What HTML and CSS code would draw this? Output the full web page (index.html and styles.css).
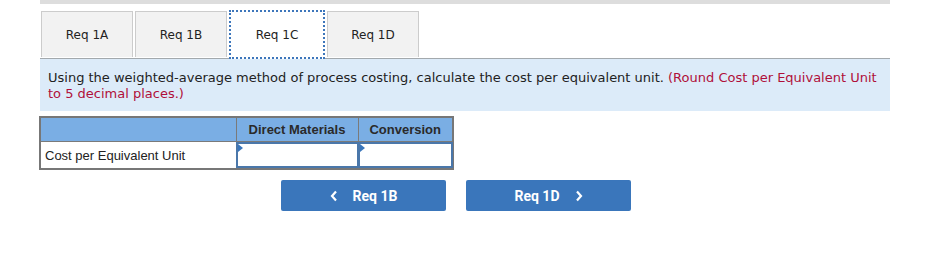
FILE: index.html
```html
<!DOCTYPE html>
<html>
<head>
<meta charset="utf-8">
<link rel="stylesheet" href="styles.css">
</head>
<body>
<div class="wrap">
  <div class="topbar"></div>
  <div class="tabs">
    <div class="tab">Req 1A</div>
    <div class="tab">Req 1B</div>
    <div class="tab active">Req 1C</div>
    <div class="tab">Req 1D</div>
  </div>
  <div class="panel">
    <p class="instr">Using the weighted-average method of process costing, calculate the cost per equivalent unit. <span class="note">(Round Cost per Equivalent Unit to 5 decimal places.)</span></p>
  </div>
  <table class="grid">
    <colgroup>
      <col class="c1">
      <col class="c2">
      <col class="c3">
    </colgroup>
    <tr class="head">
      <th class="label"></th>
      <th>Direct Materials</th>
      <th>Conversion</th>
    </tr>
    <tr class="row">
      <td class="label">Cost per Equivalent Unit</td>
      <td class="cell"><div class="inp"><span class="tri"></span></div></td>
      <td class="cell"><div class="inp"><span class="tri"></span></div></td>
    </tr>
  </table>
  <div class="nav">
    <button class="btn"><svg class="chev" width="8" height="12" viewBox="0 0 8 12"><path d="M6 1.5 L2 6 L6 10.5" fill="none" stroke="#fff" stroke-width="2.2"/></svg><span>Req 1B</span></button>
    <button class="btn"><span>Req 1D</span><svg class="chev" width="8" height="12" viewBox="0 0 8 12"><path d="M2 1.5 L6 6 L2 10.5" fill="none" stroke="#fff" stroke-width="2.2"/></svg></button>
  </div>
</div>
</body>
</html>
```
FILE: styles.css
```css
body { margin: 0; background: #fff; }
.wrap { margin-left: 40px; width: 850px; }
.topbar { height: 4px; background: #dddddd; }
.tabs { display: flex; margin-top: 7px; padding-left: 1px; border-bottom: 1px solid #a3a9ad; height: 47px; }
.tab {
  width: 90px; height: 45px; margin-right: 2px;
  background: #f2f2f2; border: 1px solid #cccccc; border-bottom: none;
  font-family: "DejaVu Sans", sans-serif; font-size: 12px; color: #222;
  display: flex; align-items: center; justify-content: center;
  box-sizing: content-box;
}
.tab.active {
  background: #fff; border: 2px dotted #3d76bb; width: 92px; height: 45px;
  margin-top: -1px; position: relative; z-index: 1; margin-bottom: -1px;
}
.panel { background: #dcebf9; padding: 11px 8px 9px 8px; }
.instr { margin: 0; font-family: "DejaVu Sans", sans-serif; font-size: 13px; line-height: 16px; color: #222; }
.note { color: #b0103a; }
.grid {
  border-collapse: collapse; table-layout: fixed; width: 413px;
  margin-top: 5px; margin-left: -1px;
  font-family: "Liberation Sans", Arial, sans-serif; font-size: 13px;
  border: 2px solid #777;
}
.c1 { width: 196px; }
.c2 { width: 122px; }
.c3 { width: 95px; }
.grid th, .grid td { border: 1px solid #7a7a7a; padding: 0; }
.head th { background: #7aaee4; height: 23px; font-weight: bold; color: #2a2a2a; }
.row td { height: 26px; }
.grid .label { text-align: left; padding-left: 4px; color: #222; }
.inp { height: 22px; border: 2px solid #4a77aa; position: relative; background: #fff; margin: 0 -1px; }
.tri { position: absolute; left: 0; top: 0; width: 0; height: 0; border-top: 4px solid transparent; border-bottom: 4px solid transparent; border-left: 5px solid #3a76bb; }
.nav { display: flex; gap: 20px; margin-top: 10px; margin-left: 241px; }
.btn {
  width: 165px; height: 31px; background: #3a76bb; border: none; border-radius: 2px;
  color: #fff; font-family: Roboto, "Liberation Sans", sans-serif; font-weight: bold; font-size: 14px;
  display: flex; align-items: center; justify-content: center; gap: 15px; padding: 0;
}
.chev { display: block; }
```
